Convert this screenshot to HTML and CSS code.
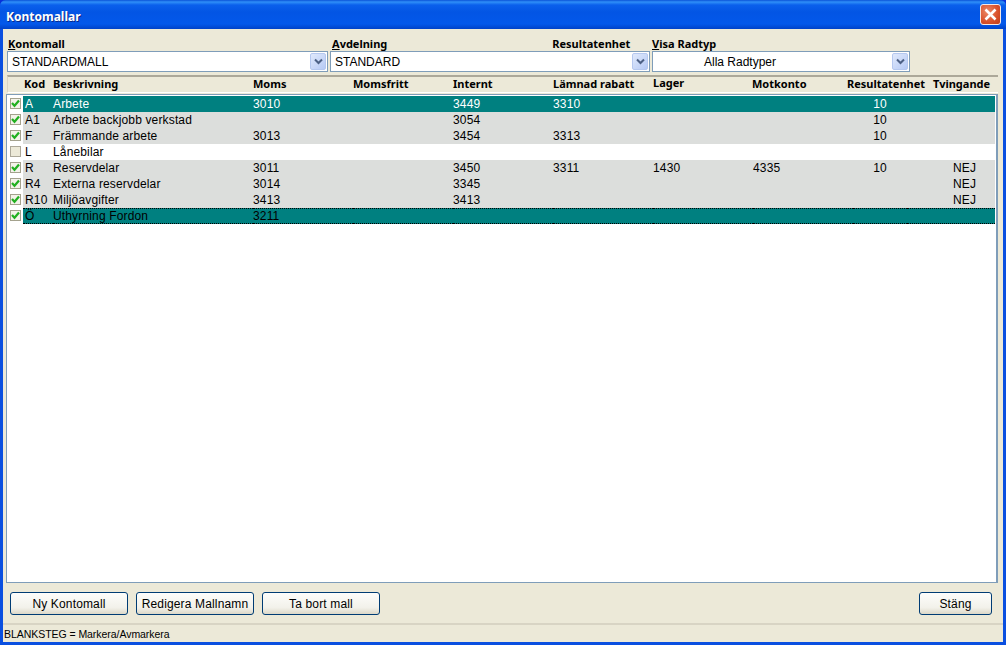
FILE: index.html
```html
<!DOCTYPE html>
<html lang="sv">
<head>
<meta charset="utf-8">
<title>Kontomallar</title>
<link rel="stylesheet" href="styles.css">
</head>
<body>
<div class="window">
  <header class="titlebar">
    <span class="title">Kontomallar</span>
    <span class="close"><svg width="21" height="21" viewBox="0 0 21 21"><path d="M5.500 5.500 15.500 15.500M15.500 5.500 5.500 15.500" fill="none" stroke="#fff" stroke-width="2.600"/></svg></span>
  </header>
  <main class="client">
    <div class="filters">
      <div class="field f1">
        <div class="flabel"><span><u>K</u>ontomall</span></div>
        <div class="combo"><span class="cval">STANDARDMALL</span><span class="arrow"><svg width="9" height="7" viewBox="0 0 9 7"><path d="M1 1.500 4.500 5 8 1.500" fill="none" stroke="#4d6185" stroke-width="2"/></svg></span></div>
      </div>
      <div class="field f2">
        <div class="flabel"><span><u>A</u>vdelning</span><span class="res">Resultatenhet</span></div>
        <div class="combo"><span class="cval">STANDARD</span><span class="arrow"><svg width="9" height="7" viewBox="0 0 9 7"><path d="M1 1.500 4.500 5 8 1.500" fill="none" stroke="#4d6185" stroke-width="2"/></svg></span></div>
      </div>
      <div class="field f3">
        <div class="flabel"><span><u>V</u>isa Radtyp</span></div>
        <div class="combo"><span class="cval centered">Alla Radtyper</span><span class="arrow"><svg width="9" height="7" viewBox="0 0 9 7"><path d="M1 1.500 4.500 5 8 1.500" fill="none" stroke="#4d6185" stroke-width="2"/></svg></span></div>
      </div>
    </div>
    <div class="thead">
      <span></span><span>Kod</span><span>Beskrivning</span><span>Moms</span><span>Momsfritt</span><span>Internt</span><span>Lämnad rabatt</span><span class="raised">Lager</span><span>Motkonto</span><span>Resultatenhet</span><span>Tvingande</span>
    </div>
    <div class="list">
      <div class="row sel"><span class="cb on"><svg width="9" height="9" viewBox="0 0 9 9"><path d="M1 4 3.500 6.800 8 1.500" fill="none" stroke="#21b021" stroke-width="2.200"/></svg></span><span class="c">A</span><span class="c">Arbete</span><span class="c">3010</span><span class="c"></span><span class="c">3449</span><span class="c">3310</span><span class="c"></span><span class="c"></span><span class="c ctr">10</span><span class="c ctr"></span></div>
      <div class="row gray"><span class="cb on"><svg width="9" height="9" viewBox="0 0 9 9"><path d="M1 4 3.500 6.800 8 1.500" fill="none" stroke="#21b021" stroke-width="2.200"/></svg></span><span class="c">A1</span><span class="c">Arbete backjobb verkstad</span><span class="c"></span><span class="c"></span><span class="c">3054</span><span class="c"></span><span class="c"></span><span class="c"></span><span class="c ctr">10</span><span class="c ctr"></span></div>
      <div class="row gray"><span class="cb on"><svg width="9" height="9" viewBox="0 0 9 9"><path d="M1 4 3.500 6.800 8 1.500" fill="none" stroke="#21b021" stroke-width="2.200"/></svg></span><span class="c">F</span><span class="c">Främmande arbete</span><span class="c">3013</span><span class="c"></span><span class="c">3454</span><span class="c">3313</span><span class="c"></span><span class="c"></span><span class="c ctr">10</span><span class="c ctr"></span></div>
      <div class="row"><span class="cb"></span><span class="c">L</span><span class="c">Lånebilar</span><span class="c"></span><span class="c"></span><span class="c"></span><span class="c"></span><span class="c"></span><span class="c"></span><span class="c ctr"></span><span class="c ctr"></span></div>
      <div class="row gray"><span class="cb on"><svg width="9" height="9" viewBox="0 0 9 9"><path d="M1 4 3.500 6.800 8 1.500" fill="none" stroke="#21b021" stroke-width="2.200"/></svg></span><span class="c">R</span><span class="c">Reservdelar</span><span class="c">3011</span><span class="c"></span><span class="c">3450</span><span class="c">3311</span><span class="c">1430</span><span class="c">4335</span><span class="c ctr">10</span><span class="c ctr">NEJ</span></div>
      <div class="row gray"><span class="cb on"><svg width="9" height="9" viewBox="0 0 9 9"><path d="M1 4 3.500 6.800 8 1.500" fill="none" stroke="#21b021" stroke-width="2.200"/></svg></span><span class="c">R4</span><span class="c">Externa reservdelar</span><span class="c">3014</span><span class="c"></span><span class="c">3345</span><span class="c"></span><span class="c"></span><span class="c"></span><span class="c ctr"></span><span class="c ctr">NEJ</span></div>
      <div class="row gray"><span class="cb on"><svg width="9" height="9" viewBox="0 0 9 9"><path d="M1 4 3.500 6.800 8 1.500" fill="none" stroke="#21b021" stroke-width="2.200"/></svg></span><span class="c">R10</span><span class="c">Miljöavgifter</span><span class="c">3413</span><span class="c"></span><span class="c">3413</span><span class="c"></span><span class="c"></span><span class="c"></span><span class="c ctr"></span><span class="c ctr">NEJ</span></div>
      <div class="row sel focus"><span class="cb on"><svg width="9" height="9" viewBox="0 0 9 9"><path d="M1 4 3.500 6.800 8 1.500" fill="none" stroke="#21b021" stroke-width="2.200"/></svg></span><span class="c">Ö</span><span class="c">Uthyrning Fordon</span><span class="c">3211</span><span class="c"></span><span class="c"></span><span class="c"></span><span class="c"></span><span class="c"></span><span class="c ctr"></span><span class="c ctr"></span></div>
    </div>
    <div class="actions">
      <button class="btn">Ny Kontomall</button>
      <button class="btn">Redigera Mallnamn</button>
      <button class="btn">Ta bort mall</button>
      <button class="btn close-btn">Stäng</button>
    </div>
    <footer class="status">BLANKSTEG = Markera/Avmarkera</footer>
  </main>
</div>
</body>
</html>
```
FILE: styles.css
```css
* { box-sizing: border-box; }
html, body { margin: 0; padding: 0; }
body { width: 1006px; height: 645px; overflow: hidden; font: 12px "Liberation Sans", sans-serif; letter-spacing: .15px; color: #000; background: #0831d9; }
.window { width: 1006px; height: 645px; display: flex; flex-direction: column; background: #0a4fe0; border-radius: 6px 6px 0 0; }
.titlebar { height: 29px; flex: none; display: flex; align-items: center; justify-content: space-between; padding: 0 5px 0 6px; background: linear-gradient(#0a53d8 0, #2f8ff8 2px, #0a60ec 5px, #0355e4 12px, #0358ea 24px, #0042c8 29px); border-radius: 6px 6px 0 0; }
.title { color: #fff; font: bold 12px "Noto Sans", sans-serif; letter-spacing: 0; text-shadow: 1px 1px 0 #0a2a8a; padding-top: 3px; }
.close { width: 21px; height: 21px; border: 1px solid #f4e8e4; border-radius: 3px; background: radial-gradient(circle at 35% 35%, #ec8a68, #d8502a 60%, #c03c1a); display: flex; }
.close svg { margin: -1px; }
.client { flex: none; width: 1000px; height: 613px; margin-left: 3px; background: #ece9d8; display: flex; flex-direction: column; }
.filters { display: flex; height: 43px; flex: none; padding: 8px 0 0 4px; }
.field { display: flex; flex-direction: column; }
.f1 { width: 323px; }
.f2 { width: 322px; }
.f3 { width: 258px; }
.flabel { height: 14px; padding-left: 1px; display: flex; letter-spacing: 0; font: bold 11px/13px "Noto Sans", sans-serif; }
.f2 .flabel { padding-left: 2px; }
.f3 .flabel { padding-left: 0; }
.res { margin-left: 165px; }
.combo { height: 21px; width: 100%; background: #fff; border: 1px solid #7f9db9; display: flex; align-items: center; justify-content: space-between; padding-left: 4px; letter-spacing: 0; }
.f1 .combo { width: 321px; }
.f2 .combo { width: 320px; }
.cval { flex: 1; }
.centered { padding-left: 47px; }
.arrow { width: 16px; height: 17px; margin-right: 1px; border: 1px solid #b5c8ef; border-radius: 2px; background: linear-gradient(135deg, #e0e9fb, #b6caf5); display: flex; align-items: center; justify-content: center; }
.thead { display: grid; grid-template-columns: 16px 29px 200px 100px 100px 100px 100px 99px 95px 86px 60px; height: 18px; flex: none; margin: 3px 5px 0 4px; border-top: 2px solid #aca899; border-left: 1px solid #d8d4c4; border-bottom: 1px solid #fff; letter-spacing: 0; font: bold 11px/13px "Noto Sans", sans-serif; }
.thead span { white-space: nowrap; }
.thead .raised { line-height: 11px; }
.list { flex: none; width: 992px; height: 489px; margin: 1px 0 0 3px; padding: 1px; border: 1px solid #7f9db9; border-right-width: 2px; background: #fff; }
.row { display: grid; grid-template-columns: 15px 30px 200px 100px 100px 100px 100px 100px 100px 54px 88px; height: 16px; line-height: 15px; white-space: nowrap; width: 987px; }
.cb { width: 11px; height: 11px; margin: 2px 0 0 2px; background: #ece9d8; border: 1px solid #aca899; display: flex; align-items: center; justify-content: center; }
.cb.on { background: #f4f3ea; border-color: #a4a28e; }
.c { height: 16px; padding-top: 1px; }
.c:nth-child(2) { padding-left: 2px; }
.c:last-child { padding-left: 27px; }
.gray .c { background: #dcdedc; }
.sel .c { background: #008080; color: #fff; }
.focus .c { color: #000; padding-top: 0; border-top: 1px dotted #000; border-bottom: 1px dotted #000; line-height: 14px; }
.ctr { text-align: center; }
.actions { flex: none; height: 42px; display: flex; gap: 8px; padding: 9px 11px 0 7px; border-bottom: 2px solid #d8d4c4; }
.btn { width: 118px; height: 23px; font: 12px "Liberation Sans", sans-serif; letter-spacing: .15px; color: #000; padding: 0; background: linear-gradient(#fdfdfb, #f2f1ea 70%, #dcd8c8); border: 1px solid #003c74; border-radius: 3px; }
.close-btn { width: 73px; margin-left: auto; }
.status { flex: 1; font-size: 10.500px; letter-spacing: -.05px; line-height: 18px; padding-left: 1px; white-space: nowrap; }
```
